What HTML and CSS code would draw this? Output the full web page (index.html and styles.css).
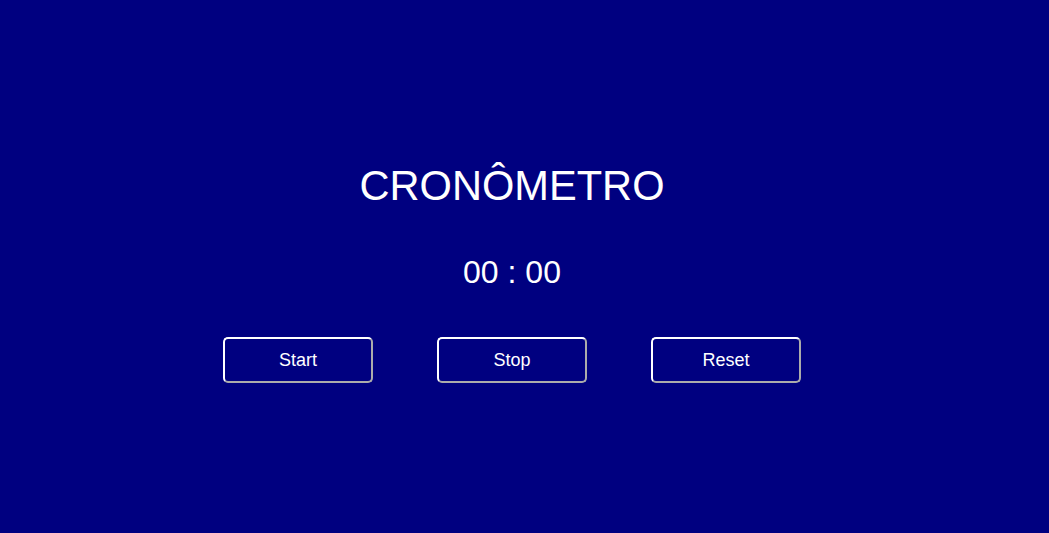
FILE: index.html
```html
<!DOCTYPE html>
<html lang="pt">
<head>
<meta charset="utf-8">
<title>Cronômetro</title>
<link rel="stylesheet" href="styles.css">
</head>
<body>
<main class="app">
  <h1 class="title">CRONÔMETRO</h1>
  <div class="timer">00 : 00</div>
  <div class="controls">
    <button class="btn">Start</button>
    <button class="btn">Stop</button>
    <button class="btn">Reset</button>
  </div>
</main>
</body>
</html>
```
FILE: styles.css
```css
html, body {
  margin: 0;
  height: 100%;
  background: #000080;
}
body {
  font-family: "Liberation Sans", Arial, sans-serif;
  color: #fff;
}
.app {
  width: 1024px;
  height: 533px;
  box-sizing: border-box;
  padding-top: 161px;
  display: flex;
  flex-direction: column;
  align-items: center;
}
.title {
  margin: 0;
  font-size: 41.6px;
  font-weight: normal;
  line-height: 50px;
}
.timer {
  margin-top: 41px;
  font-size: 32px;
  line-height: 40px;
}
.controls {
  margin-top: 45px;
  display: flex;
  gap: 64px;
}
.btn {
  width: 150px;
  height: 46px;
  background: transparent;
  color: #fff;
  font-family: "Liberation Sans", Arial, sans-serif;
  font-size: 18px;
  border: 2px outset #fff;
  border-radius: 5px;
  padding: 0;
}
```
